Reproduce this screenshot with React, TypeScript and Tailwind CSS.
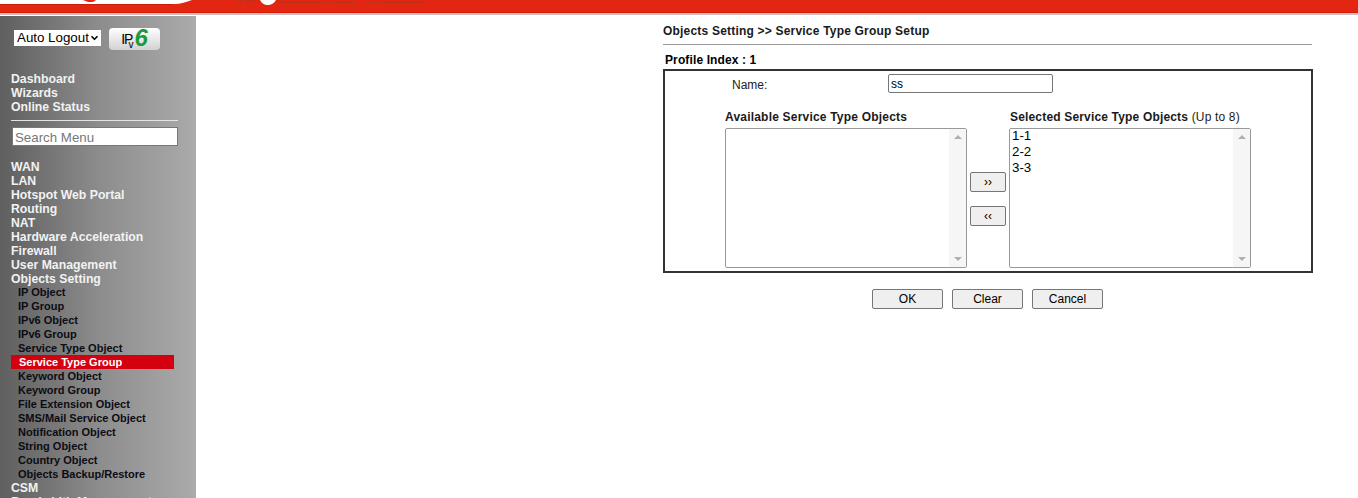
import { ChevronDown } from 'lucide-react';

const topItems = ['Dashboard', 'Wizards', 'Online Status'];
const mainItems = ['WAN', 'LAN', 'Hotspot Web Portal', 'Routing', 'NAT', 'Hardware Acceleration', 'Firewall', 'User Management', 'Objects Setting'];
const subItems = [
  'IP Object',
  'IP Group',
  'IPv6 Object',
  'IPv6 Group',
  'Service Type Object',
  'Service Type Group',
  'Keyword Object',
  'Keyword Group',
  'File Extension Object',
  'SMS/Mail Service Object',
  'Notification Object',
  'String Object',
  'Country Object',
  'Objects Backup/Restore',
];
const actionButtons = ['OK', 'Clear', 'Cancel'];

function Header() {
  return (
    <div className="h-[16px] shrink-0 bg-white">
      <svg width="1358" height="16" className="block">
        <rect width="1358" height="13" fill="#e32612" />
        <rect y="12" width="1358" height="1" fill="#d81e0c" />
        <rect y="13" width="1358" height="2" fill="#c9c2c0" />
        <path d="M0 0H192C186 2 181 4 174 4H0Z" fill="#fff" />
        <path d="M0 4H174L172 5H0Z" fill="#c81c0c" />
        <path d="M83 0H96L93 2H88Z" fill="#e32612" />
        <path d="M260 0H276C274 4 270 5 268 5C265 5 262 4 260 0Z" fill="#fff" />
        <path d="M238 1L244 3M246 1H256M280 2H356M370 2H425" stroke="#b5361f" strokeWidth="2" strokeDasharray="5 2" fill="none" />
      </svg>
    </div>
  );
}

function Ipv6Badge() {
  return (
    <div className="ml-[8px] flex h-[22px] w-[51px] items-center justify-center rounded-[4px] bg-gradient-to-b from-[#ffffff] to-[#d2d2d2] font-['Liberation_Sans',Arial,sans-serif] text-black">
      <span className="text-[14px] tracking-[-1px]">IP</span>
      <span className="-ml-[4px] mt-[11px] text-[10px] leading-none">v</span>
      <span className="ml-[1px] -mt-[2px] text-[24px] font-bold italic leading-none text-[#1c9a3c]">6</span>
    </div>
  );
}

function Sidebar() {
  return (
    <aside className="h-full w-[196px] shrink-0 overflow-hidden bg-gradient-to-r from-[#5f5f5f] via-[#8c8c8c] to-[#ababab] pl-[11px] font-['Liberation_Sans',Arial,sans-serif]">
      <div className="flex items-start pl-[3px] pt-[12px]">
        <div className="relative mt-[2px] h-[16px] w-[87px]">
          <select className="block h-[16px] w-[87px] appearance-none bg-white py-0 pl-[3px] pr-0 text-[13.33px] leading-none text-black" defaultValue="Auto Logout">
            <option>Auto Logout</option>
          </select>
          <ChevronDown className="pointer-events-none absolute right-[1px] top-[3px] h-[10px] w-[11px] text-black" strokeWidth={4} />
        </div>
        <Ipv6Badge />
      </div>
      <ul className="mt-[21px] text-[12.25px] font-bold leading-[16px] text-[#f2f2f2]">
        {topItems.map(item => (
          <li key={item} className="h-[14px]">{item}</li>
        ))}
      </ul>
      <div className="mt-[7px] h-px w-[167px] bg-[#e4e4e4]" />
      <input
        readOnly
        placeholder="Search Menu"
        className="ml-px mt-[6px] block h-[19px] w-[166px] border border-[#777] bg-white px-[2px] pt-[2px] text-[13.3px] text-black outline-none placeholder:text-[#777]"
      />
      <ul className="mt-[13px] text-[12.25px] font-bold leading-[16px] text-[#f2f2f2]">
        {mainItems.map(item => (
          <li key={item} className="h-[14px]">{item}</li>
        ))}
      </ul>
      <ul className="text-[11px] font-bold leading-[14px] text-[#0c0c14]">
        {subItems.map(item =>
          item === 'Service Type Group' ? (
            <li key={item} className="h-[14px] w-[163px] bg-[#d5000f] pl-[8px] text-white">{item}</li>
          ) : (
            <li key={item} className="h-[14px] pl-[7px]">{item}</li>
          ),
        )}
      </ul>
      <ul className="text-[12.25px] font-bold leading-[14px] text-[#f2f2f2]">
        <li className="h-[14px]">CSM</li>
        <li className="h-[14px]">Bandwidth Management</li>
      </ul>
    </aside>
  );
}

function ListBox({ items }: { items: string[] }) {
  return (
    <div className="flex h-[140px] w-[242px] rounded-[2px] border border-[#999] bg-white">
      <div className="-mt-px flex-1 pl-[2px] text-[13.3px] leading-[16px] text-black">
        {items.map(item => (
          <div key={item}>{item}</div>
        ))}
      </div>
      <div className="flex w-[17px] flex-col items-center justify-between bg-[#f6f6f6] py-[6px]">
        <div className="h-0 w-0 border-x-[4px] border-b-[4px] border-x-transparent border-b-[#b0b0b0]" />
        <div className="h-0 w-0 border-x-[4px] border-t-[4px] border-x-transparent border-t-[#b0b0b0]" />
      </div>
    </div>
  );
}

function SmallButton({ label }: { label: string }) {
  return (
    <button className="flex h-[20px] w-[36px] items-center justify-center rounded-[2px] border border-[#767676] bg-[#efefef] text-[12px] leading-none text-black">
      {label}
    </button>
  );
}

function SetupPanel() {
  return (
    <main className="w-[650px] pt-[8px] font-['Liberation_Sans',Arial,sans-serif] text-[12px] text-black">
      <h1 className="h-[20px] text-[12px] font-bold leading-[14px] tracking-[0.2px] text-[#1a1a1a]">
        Objects Setting &gt;&gt; Service Type Group Setup
      </h1>
      <div className="h-px w-[649px] bg-[#999]" />
      <div className="pl-[2px] pt-[8px] text-[12px] font-bold leading-[14px] tracking-[0.12px]">Profile Index : 1</div>
      <section className="mt-[2px] h-[204px] w-[650px] border-2 border-[#333] pl-[60px]">
        <div className="flex items-start pt-[3px]">
          <span className="ml-[7px] w-[156px] pt-[4px] text-[12px] leading-[14px] text-[#222]">Name:</span>
          <input
            readOnly
            value="ss"
            className="h-[19px] w-[165px] rounded-[2px] border border-[#767676] bg-white px-[2px] text-[12px] text-black outline-none"
          />
        </div>
        <div className="mt-[16px] flex">
          <div>
            <div className="h-[19px] pt-px text-[12px] font-bold leading-[14px] tracking-[0.2px] text-[#1a1a1a]">Available Service Type Objects</div>
            <ListBox items={[]} />
          </div>
          <div className="flex w-[42px] flex-col items-center gap-[14px] pt-[63px]">
            <SmallButton label="››" />
            <SmallButton label="‹‹" />
          </div>
          <div>
            <div className="h-[19px] pl-px pt-px text-[12px] leading-[14px] tracking-[0.17px] text-[#1a1a1a]">
              <span className="font-bold">Selected Service Type Objects</span> (Up to 8)
            </div>
            <ListBox items={['1-1', '2-2', '3-3']} />
          </div>
        </div>
      </section>
      <div className="mt-[16px] flex justify-center gap-[9px] pr-px">
        {actionButtons.map(label => (
          <button
            key={label}
            className="h-[20px] w-[71px] rounded-[2px] border border-[#767676] bg-[#efefef] text-[12px] leading-none text-black"
          >
            {label}
          </button>
        ))}
      </div>
    </main>
  );
}

export default function App() {
  return (
    <div className="flex h-[498px] w-[1358px] flex-col overflow-hidden bg-white">
      <Header />
      <div className="flex min-h-0 flex-1">
        <Sidebar />
        <div className="pl-[467px]">
          <SetupPanel />
        </div>
      </div>
    </div>
  );
}
